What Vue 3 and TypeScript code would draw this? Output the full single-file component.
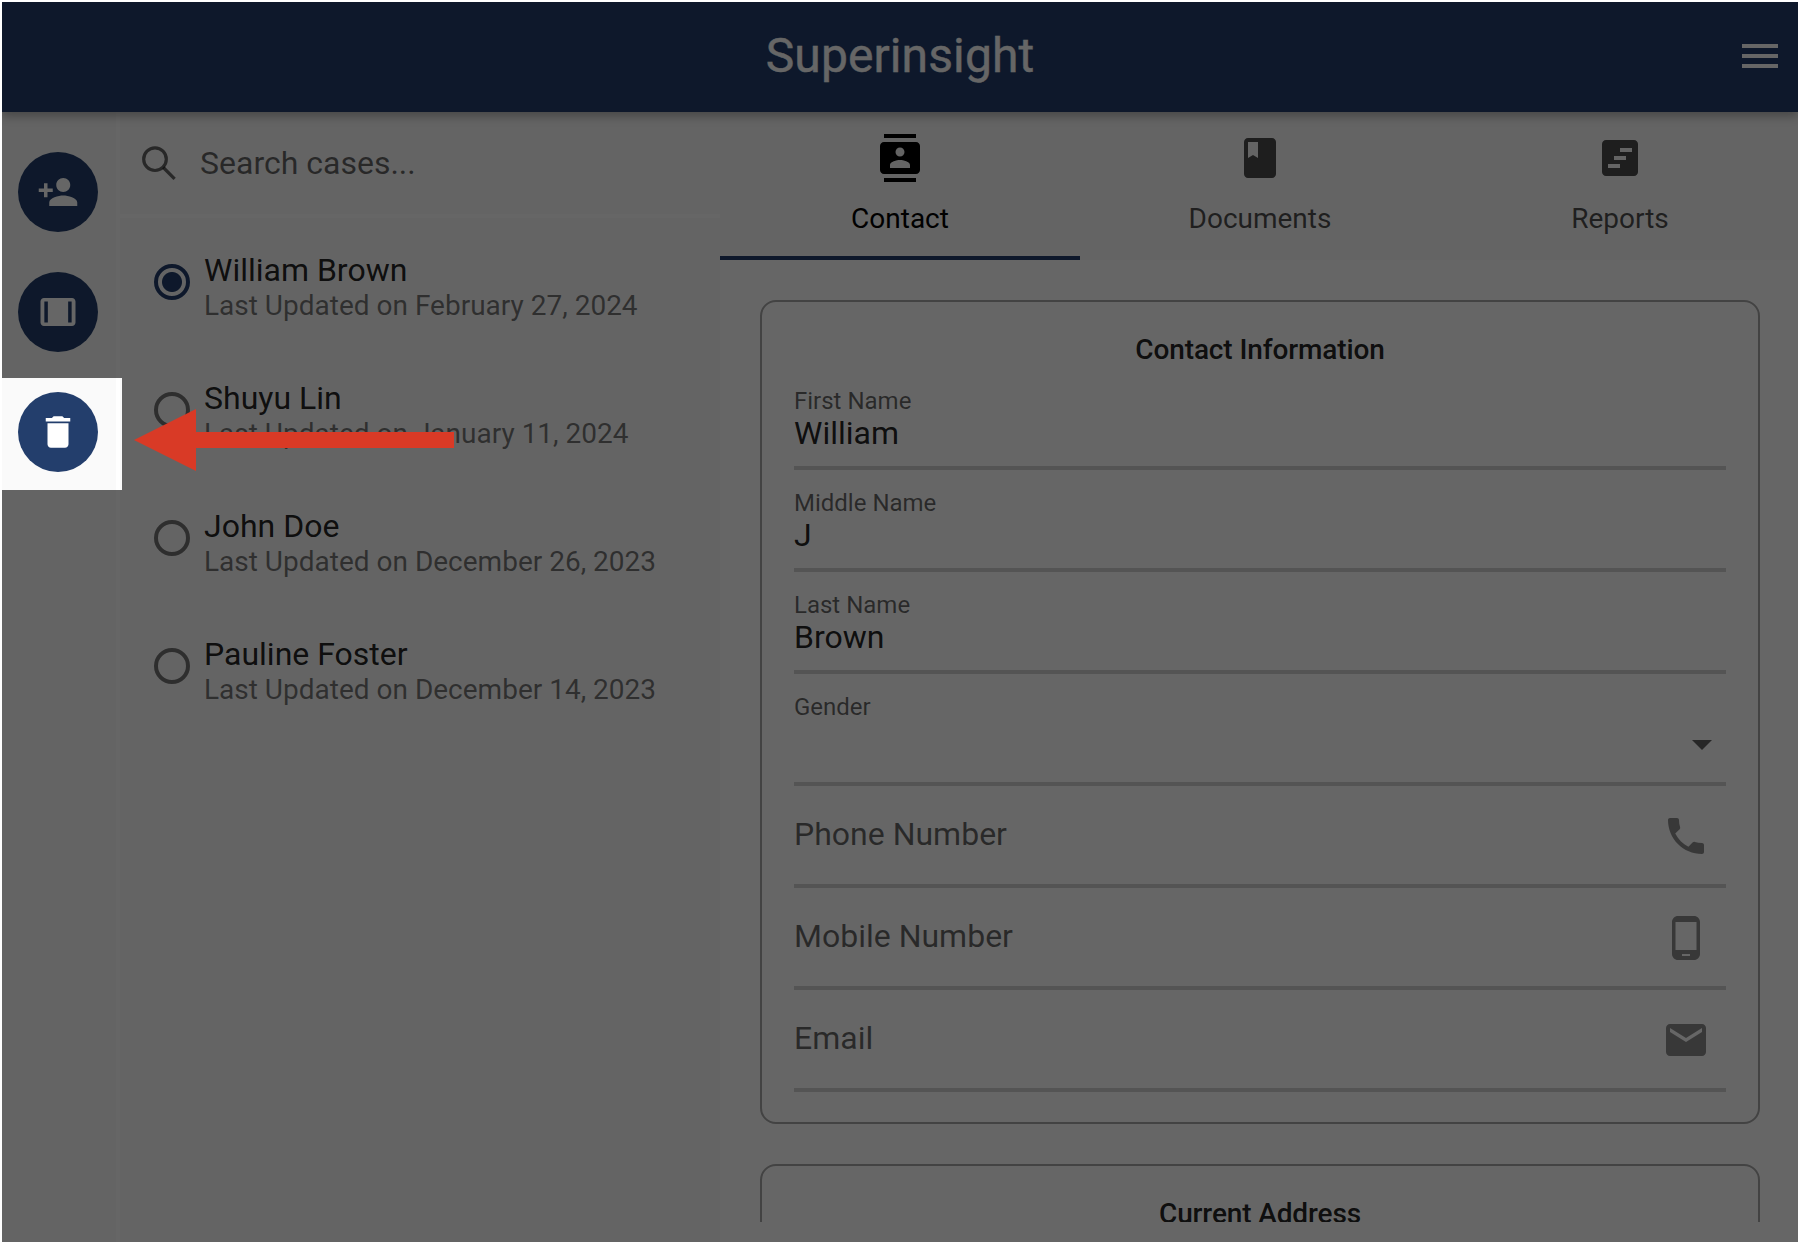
<script setup lang="ts">
interface CaseItem {
  name: string
  updated: string
}

interface Field {
  label: string
  value?: string
  icon?: string
  kind: 'text' | 'select' | 'empty'
}

const icons = {
  personAdd:
    'M15 12c2.21 0 4-1.79 4-4s-1.79-4-4-4-4 1.79-4 4 1.79 4 4 4zm-9-2V7H4v3H1v2h3v3h2v-3h3v-2H6zm9 4c-2.67 0-8 1.34-8 4v2h16v-2c0-2.66-5.33-4-8-4z',
  panel:
    'M20 4H4c-1.1 0-2 .9-2 2v12c0 1.1.9 2 2 2h16c1.1 0 2-.9 2-2V6c0-1.1-.9-2-2-2zM6.2 18H4.2V6h2v12zm13.6 0h-2V6h2v12z',
  trash: 'M6 19c0 1.1.9 2 2 2h8c1.1 0 2-.9 2-2V7H6v12zM19 4h-3.5l-1-1h-5l-1 1H5v2h14V4z',
  menu: 'M3 18h18v-2H3v2zm0-5h18v-2H3v2zm0-7v2h18V6H3z',
  contacts:
    'M20 0H4v2h16V0zM4 24h16v-2H4v2zM20 4H4c-1.1 0-2 .9-2 2v12c0 1.1.9 2 2 2h16c1.1 0 2-.9 2-2V6c0-1.1-.9-2-2-2zm-8 2.75c1.24 0 2.25 1.01 2.25 2.25s-1.01 2.25-2.25 2.25S9.75 10.24 9.75 9 10.76 6.75 12 6.75zM17 17H7v-1.5c0-1.67 3.33-2.5 5-2.5s5 .83 5 2.5V17z',
  book: 'M18 2H6c-1.1 0-2 .9-2 2v16c0 1.1.9 2 2 2h12c1.1 0 2-.9 2-2V4c0-1.1-.9-2-2-2zM6 4h5v8l-2.5-1.5L6 12V4z',
  report:
    'M19 3H5c-1.1 0-2 .9-2 2v14c0 1.1.9 2 2 2h14c1.1 0 2-.9 2-2V5c0-1.1-.9-2-2-2zm-7 14H6v-2h6v2zm3-4H9v-2h6v2zm3-4h-6V7h6v2z',
  caret: 'M7 10l5 5 5-5z',
  phone:
    'M6.62 10.79c1.44 2.83 3.76 5.14 6.59 6.59l2.2-2.2c.27-.27.67-.36 1.02-.24 1.12.37 2.33.57 3.57.57.55 0 1 .45 1 1V20c0 .55-.45 1-1 1-9.39 0-17-7.61-17-17 0-.55.45-1 1-1h3.5c.55 0 1 .45 1 1 0 1.25.2 2.45.57 3.57.11.35.03.74-.25 1.02l-2.2 2.2z',
  mobile:
    'M16 1H8C6.34 1 5 2.34 5 4v16c0 1.66 1.34 3 3 3h8c1.66 0 3-1.34 3-3V4c0-1.66-1.34-3-3-3zm-2 20h-4v-1h4v1zm3.25-3H6.75V4h10.5v14z',
  mail: 'M20 4H4c-1.1 0-1.99.9-1.99 2L2 18c0 1.1.9 2 2 2h16c1.1 0 2-.9 2-2V6c0-1.1-.9-2-2-2zm0 4l-8 5-8-5V6l8 5 8-5v2z',
}

const railActions = [
  { label: 'Add case', icon: icons.personAdd },
  { label: 'Toggle panel', icon: icons.panel },
  { label: 'Delete case', icon: icons.trash },
]

const cases: CaseItem[] = [
  { name: 'William Brown', updated: 'February 27, 2024' },
  { name: 'Shuyu Lin', updated: 'January 11, 2024' },
  { name: 'John Doe', updated: 'December 26, 2023' },
  { name: 'Pauline Foster', updated: 'December 14, 2023' },
]
const selected = 0

const tabs = [
  { label: 'Contact', icon: icons.contacts },
  { label: 'Documents', icon: icons.book },
  { label: 'Reports', icon: icons.report },
]
const activeTab = 0

const fields: Field[] = [
  { label: 'First Name', value: 'William', kind: 'text' },
  { label: 'Middle Name', value: 'J', kind: 'text' },
  { label: 'Last Name', value: 'Brown', kind: 'text' },
  { label: 'Gender', kind: 'select', icon: icons.caret },
  { label: 'Phone Number', kind: 'empty', icon: icons.phone },
  { label: 'Mobile Number', kind: 'empty', icon: icons.mobile },
  { label: 'Email', kind: 'empty', icon: icons.mail },
]
</script>

<template>
  <div class="page">
    <div class="frame">
      <header class="bar">
        <h1 class="title">Superinsight</h1>
        <svg class="icon menu" viewBox="0 0 24 24"><path :d="icons.menu" /></svg>
      </header>

      <div class="body">
        <nav class="rail">
          <button v-for="a in railActions" :key="a.label" class="fab" :aria-label="a.label">
            <svg class="fab-icon" viewBox="0 0 24 24"><path :d="a.icon" /></svg>
          </button>
        </nav>

        <aside class="cases">
          <div class="search">
            <svg class="icon outline" viewBox="0 0 48 48">
              <circle cx="19" cy="20.2" r="11.3" />
              <path d="M27.3 28.5L38.6 39.8" />
            </svg>
            <span>Search cases...</span>
          </div>
          <ul class="list">
            <li v-for="(c, i) in cases" :key="c.name" class="case">
              <span class="radio" :class="{ on: i === selected }"></span>
              <div>
                <div class="name">{{ c.name }}</div>
                <div class="updated">Last Updated on {{ c.updated }}</div>
              </div>
            </li>
          </ul>
        </aside>

        <main class="main">
          <div class="tabs">
            <div v-for="(t, i) in tabs" :key="t.label" class="tab" :class="{ active: i === activeTab }">
              <svg class="icon" viewBox="0 0 24 24"><path :d="t.icon" /></svg>
              <span>{{ t.label }}</span>
            </div>
          </div>

          <div class="scroll">
            <section class="card">
              <h2 class="card-title">Contact Information</h2>
              <div v-for="f in fields" :key="f.label" class="field" :class="f.kind">
                <div class="field-text">
                  <div class="label">{{ f.label }}</div>
                  <div v-if="f.value" class="value">{{ f.value }}</div>
                </div>
                <svg v-if="f.icon" class="icon field-icon" viewBox="0 0 24 24"><path :d="f.icon" /></svg>
              </div>
            </section>
            <section class="card">
              <h2 class="card-title">Current Address</h2>
            </section>
          </div>
        </main>
      </div>

      <div class="spotlight"></div>
      <svg class="arrow" viewBox="0 0 320 62"><path d="M0 31L62 0V23H320V39H62V62Z" /></svg>
    </div>
  </div>
</template>

<style>
html,
body {
  margin: 0;
  background: #fff;
}
</style>

<style scoped>
.page {
  box-sizing: border-box;
  width: 1800px;
  height: 1244px;
  padding: 2px;
  font-family: Roboto, 'Liberation Sans', sans-serif;
  color: rgba(0, 0, 0, 0.87);
}
.frame {
  position: relative;
  display: flex;
  flex-direction: column;
  height: 1240px;
  overflow: hidden;
  background: #fff;
}
.icon {
  width: 48px;
  height: 48px;
  flex: none;
  fill: currentColor;
}
.icon.outline {
  fill: none;
  stroke: currentColor;
  stroke-width: 3.2;
}
.bar {
  position: relative;
  z-index: 1;
  display: flex;
  align-items: center;
  flex: none;
  height: 110px;
  box-sizing: border-box;
  padding: 0 14px 2px 62px;
  background: #233e6c;
  color: #fff;
  box-shadow: 0 4px 8px rgba(0, 0, 0, 0.2), 0 6px 12px rgba(0, 0, 0, 0.1);
}
.title {
  flex: 1;
  margin: 0;
  text-align: center;
  font-size: 48px;
  line-height: 64px;
  font-weight: 400;
  letter-spacing: 0.1px;
  -webkit-text-stroke: 0.4px currentColor;
}
.body {
  display: flex;
  flex: 1;
  min-height: 0;
}
.rail {
  box-sizing: border-box;
  width: 118px;
  flex: none;
  display: flex;
  flex-direction: column;
  gap: 40px;
  padding: 40px 0 0 16px;
  background: #fafafa;
  border-right: 4px solid #fff;
}
.fab {
  display: flex;
  align-items: center;
  justify-content: center;
  width: 80px;
  height: 80px;
  padding: 0;
  border: 0;
  border-radius: 50%;
  background: #233e6c;
  color: #fff;
}
.fab-icon {
  width: 42px;
  height: 42px;
  fill: currentColor;
}
.cases {
  width: 600px;
  flex: none;
  background: #fafafa;
}
.search {
  box-sizing: border-box;
  display: flex;
  align-items: center;
  gap: 16px;
  height: 106px;
  padding: 0 16px;
  border-bottom: 4px solid #fff;
  font-size: 32px;
  color: rgba(0, 0, 0, 0.6);
}
.list {
  list-style: none;
  margin: 0;
  padding: 0 0 0 34px;
}
.case {
  display: flex;
  align-items: center;
  gap: 14px;
  height: 128px;
}
.radio {
  box-sizing: border-box;
  width: 36px;
  height: 36px;
  flex: none;
  border: 4px solid rgba(0, 0, 0, 0.54);
  border-radius: 50%;
}
.radio.on {
  border-color: #233e6c;
  background: radial-gradient(circle, #233e6c 9.5px, transparent 10.5px);
}
.name {
  font-size: 32px;
  line-height: 36px;
  padding-top: 12px;
}
.updated {
  font-size: 28px;
  line-height: 36px;
  color: rgba(0, 0, 0, 0.54);
}
.main {
  flex: 1;
  min-width: 0;
  display: flex;
  flex-direction: column;
}
.tabs {
  display: flex;
  flex: none;
  height: 148px;
  background: #fafafa;
  overflow: hidden;
}
.tab {
  box-sizing: border-box;
  flex: none;
  width: 360px;
  display: flex;
  flex-direction: column;
  align-items: center;
  gap: 21px;
  padding-top: 22px;
  border-bottom: 4px solid transparent;
  font-size: 28px;
  line-height: 32px;
  color: rgba(0, 0, 0, 0.7);
}
.tab.active {
  border-bottom-color: #233e6c;
  color: #000;
}
.scroll {
  display: flex;
  flex-direction: column;
  gap: 40px;
  height: 962px;
  box-sizing: border-box;
  padding: 40px 38px 0 40px;
  overflow: hidden;
}
.card {
  box-sizing: border-box;
  flex: none;
  width: 1000px;
  padding: 31px 32px 30px;
  border: 2px solid #a8a8a8;
  border-radius: 16px;
}
.card-title {
  margin: 0 0 1px;
  text-align: center;
  font-size: 28px;
  line-height: 34px;
  font-weight: 500;
  letter-spacing: -0.12px;
}
.field {
  box-sizing: border-box;
  display: flex;
  justify-content: space-between;
  align-items: center;
  height: 102px;
  border-bottom: 4px solid #d2d2d2;
}
.field.select {
  height: 112px;
}
.field-text {
  align-self: flex-start;
  padding-top: 19px;
}
.label {
  font-size: 24px;
  line-height: 28px;
  color: rgba(0, 0, 0, 0.6);
}
.value {
  font-size: 32px;
  line-height: 36px;
}
.field-icon {
  margin: 2px 16px 0 0;
  color: rgba(0, 0, 0, 0.45);
}
.select .field-icon {
  margin: 32px 0 0;
  color: rgba(0, 0, 0, 0.62);
}
.empty .field-text {
  padding-top: 29px;
}
.empty .label {
  font-size: 32px;
  line-height: 38px;
}
/* Dims everything around the delete action. */
.spotlight {
  position: absolute;
  z-index: 2;
  left: 0;
  top: 376px;
  width: 120px;
  height: 112px;
  box-shadow: 0 0 0 2000px rgba(0, 0, 0, 0.6);
}
.arrow {
  position: absolute;
  z-index: 3;
  left: 132px;
  top: 407px;
  width: 320px;
  height: 62px;
  fill: #d93a26;
}
</style>
